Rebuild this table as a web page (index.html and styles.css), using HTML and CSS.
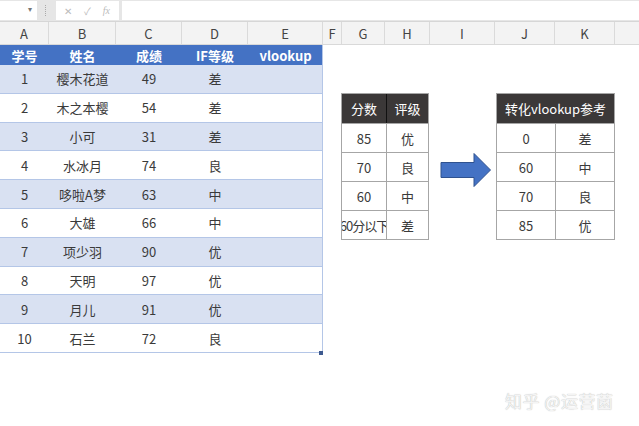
FILE: index.html
```html
<!DOCTYPE HTML>
<html lang="zh-CN">
<head>
<meta charset="UTF-8">
<title>IF转vlookup</title>
<link rel="stylesheet" href="styles.css">
</head>
<body>
<div class="topbar">
	<div class="namebox"><span class="drop">▾</span></div>
	<div class="grip"></div>
	<div class="fbtns"><span>✕</span><span>✓</span><i>fx</i></div>
	<div class="finput"></div>
</div>
<div class="colheads">
	<span class="w-a">A</span><span class="w-b">B</span><span class="w-c">C</span><span class="w-d">D</span><span class="w-e">E</span>
	<span class="w-f">F</span><span class="w-g">G</span><span class="w-h">H</span><span class="w-i">I</span><span class="w-j">J</span><span class="w-k">K</span><span class="w-l"></span>
</div>
<div class="sheet">
	<div class="data">
		<div class="row head"><span class="w-a">学号</span><span class="w-b">姓名</span><span class="w-c">成绩</span><span class="w-d">IF等级</span><span class="w-e">vlookup</span></div>
		<div class="row"><span class="w-a">1</span><span class="w-b">樱木花道</span><span class="w-c">49</span><span class="w-d">差</span><span class="w-e"></span></div>
		<div class="row"><span class="w-a">2</span><span class="w-b">木之本樱</span><span class="w-c">54</span><span class="w-d">差</span><span class="w-e"></span></div>
		<div class="row"><span class="w-a">3</span><span class="w-b">小可</span><span class="w-c">31</span><span class="w-d">差</span><span class="w-e"></span></div>
		<div class="row"><span class="w-a">4</span><span class="w-b">水冰月</span><span class="w-c">74</span><span class="w-d">良</span><span class="w-e"></span></div>
		<div class="row"><span class="w-a">5</span><span class="w-b">哆啦A梦</span><span class="w-c">63</span><span class="w-d">中</span><span class="w-e"></span></div>
		<div class="row"><span class="w-a">6</span><span class="w-b">大雄</span><span class="w-c">66</span><span class="w-d">中</span><span class="w-e"></span></div>
		<div class="row"><span class="w-a">7</span><span class="w-b">项少羽</span><span class="w-c">90</span><span class="w-d">优</span><span class="w-e"></span></div>
		<div class="row"><span class="w-a">8</span><span class="w-b">天明</span><span class="w-c">97</span><span class="w-d">优</span><span class="w-e"></span></div>
		<div class="row"><span class="w-a">9</span><span class="w-b">月儿</span><span class="w-c">91</span><span class="w-d">优</span><span class="w-e"></span></div>
		<div class="row"><span class="w-a">10</span><span class="w-b">石兰</span><span class="w-c">72</span><span class="w-d">良</span><span class="w-e"></span></div>
		<b class="handle"></b>
	</div>

	<div class="ref ref1">
		<div class="rrow rhead"><span class="c1">分数</span><span class="c2">评级</span></div>
		<div class="rrow"><span class="c1">85</span><span class="c2">优</span></div>
		<div class="rrow"><span class="c1">70</span><span class="c2">良</span></div>
		<div class="rrow"><span class="c1">60</span><span class="c2">中</span></div>
		<div class="rrow"><span class="c1 tight">60分以下</span><span class="c2">差</span></div>
	</div>

	<svg class="arrow" width="52" height="36" viewBox="0 0 52 36">
		<path d="M1 10.5 H34 V1.5 L50.5 18 L34 34.5 V25.5 H1 Z" fill="#4472C4" stroke="#2F528F" stroke-width="1"/>
	</svg>

	<div class="ref ref2">
		<div class="rrow rhead"><span class="merged">转化vlookup参考</span></div>
		<div class="rrow"><span class="c1">0</span><span class="c2">差</span></div>
		<div class="rrow"><span class="c1">60</span><span class="c2">中</span></div>
		<div class="rrow"><span class="c1">70</span><span class="c2">良</span></div>
		<div class="rrow"><span class="c1">85</span><span class="c2">优</span></div>
	</div>
</div>
<div class="mark">知乎 @运营菌</div>
</body>
</html>
```

FILE: styles.css
```css
html, body, div, span { margin:0; padding:0; }
body { width:639px; height:426px; overflow:hidden; position:relative; background:#fff; font:normal 13px "Noto Sans CJK SC","Noto Sans",sans-serif; color:#3a3a3a; }

.topbar { display:flex; height:22px; padding-top:1px; box-sizing:border-box; background:#E6E6E6; border-bottom:1px solid #D6D6D6; }
.namebox { position:relative; width:37px; height:19px; background:#fff; }
.drop { position:absolute; right:5px; top:2px; font-size:8px; color:#777; }
.grip { width:1px; height:11px; margin:4px 8px 0 8px; border-left:1px dotted #aaa; }
.fbtns { display:flex; align-items:center; gap:12px; width:63px; height:19px; margin-left:1px; padding-left:8px; box-sizing:border-box; background:#fff; color:#bbb; font-size:10px; }
.fbtns i { font-family:"Liberation Serif",serif; font-size:10px; }
.finput { flex:1; height:19px; margin-left:3px; background:#fff; }

.colheads { display:flex; height:23px; background:#F3F3F3; border-bottom:1px solid #D9D9D9; box-sizing:border-box; }
.colheads span { display:flex; align-items:center; justify-content:center; border-right:1px solid #DADADA; box-sizing:border-box; color:#444; font-size:13px; }
.colheads .w-l { flex:1; border-right:0; }

.w-a { width:49px; }
.w-b { width:67px; }
.w-c { width:66px; }
.w-d { width:66px; }
.w-e { width:75px; }
.w-f { width:19px; }
.w-g { width:43px; }
.w-h { width:45px; }
.w-i { width:65px; }
.w-j { width:60px; }
.w-k { width:60px; }

.sheet { display:flex; align-items:flex-start; }

.data { position:relative; width:323px; border-right:1px solid #B4C6E7; box-sizing:border-box; }
.row { display:flex; height:28.8px; background:#fff; border-bottom:1px solid #B4C6E7; box-sizing:border-box; }
.row:nth-child(even) { background:#D9E1F2; }
.row span { display:flex; align-items:center; justify-content:center; flex-shrink:0; }
.row.head { height:20px; background:#4472C4; border-bottom:0; color:#fff; font-weight:bold; }
.handle { position:absolute; right:-1px; bottom:-2px; width:4px; height:4px; background:#3D5A8F; }

.ref { margin-top:48px; border:1px solid #A6A6A6; border-bottom:0; box-sizing:border-box; }
.ref1 { width:88px; margin-left:18px; }
.ref2 { width:119px; margin-left:4px; }
.rrow { display:flex; height:29px; border-bottom:1px solid #A6A6A6; box-sizing:border-box; }
.rrow span { display:flex; align-items:center; justify-content:center; overflow:hidden; white-space:nowrap; }
.ref1 .c1 { width:44px; flex-shrink:0; border-right:1px solid #A6A6A6; }
.ref1 .c2 { flex:1; }
.ref1 .tight { letter-spacing:-1px; }
.ref2 .c1 { width:58px; flex-shrink:0; border-right:1px solid #A6A6A6; }
.ref2 .c2 { flex:1; }
.rhead { height:30px; background:#3B3838; color:#fff; }
.rhead .c1 { border-right-color:#111; }
.rhead .merged { flex:1; }

.arrow { margin:107px 0 0 11px; }

.mark { position:absolute; left:505px; top:388px; font-size:17px; letter-spacing:0.5px; color:#f4f4f4; text-shadow:0 0 1px #aaa; }
```
